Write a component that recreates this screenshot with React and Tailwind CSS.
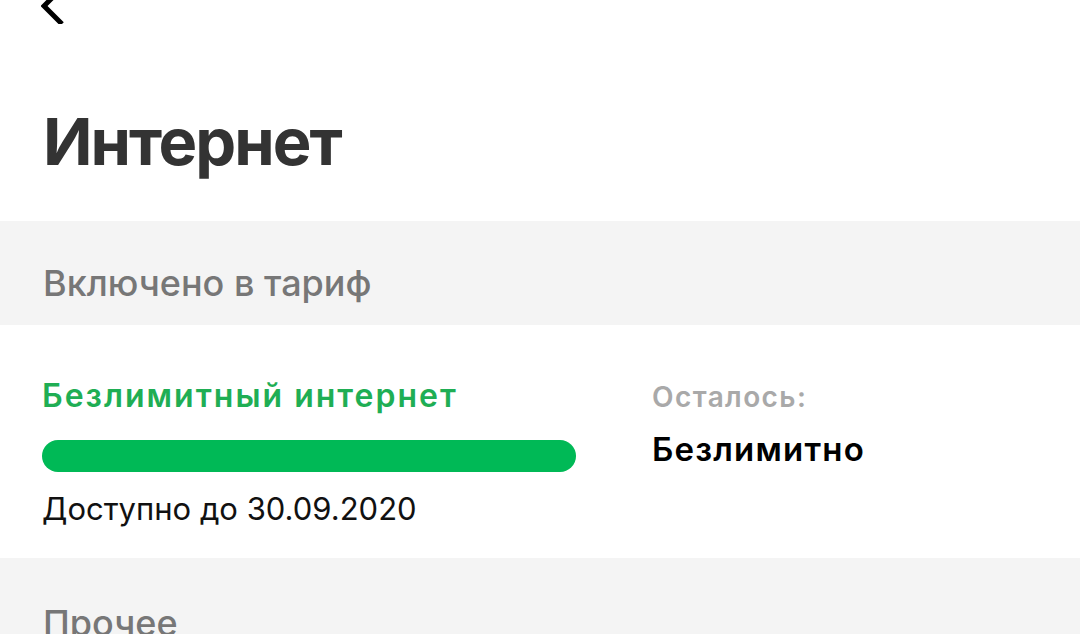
export default function App() {
  return (
    <div className="w-[1080px] h-[634px] overflow-hidden bg-white" style={{ fontFamily: 'Inter, "Noto Sans", sans-serif' }}>
      <div className="h-[221px] px-[43px] flex flex-col">
        <svg width="30" height="40" viewBox="0 0 30 40" className="-mt-[16px] -ml-[2px] block shrink-0" fill="none">
          <path d="M21 4 L3 22 L21 40" stroke="#000" strokeWidth="5" strokeLinecap="butt" strokeLinejoin="miter" />
        </svg>
        <h1 className="mt-[85px] text-[65px] leading-none font-bold text-[#333333] tracking-[-2px]">Интернет</h1>
      </div>
      <div className="h-[104px] bg-[#f4f4f4] px-[43px] pt-[44px]">
        <div className="text-[36px] leading-none font-medium text-[#777777]">Включено в тариф</div>
      </div>
      <div className="h-[233px] px-[42px] flex">
        <div className="w-[534px] flex flex-col pt-[55px]">
          <div className="text-[32px] leading-none font-semibold text-[#1fae54] tracking-[2px]">Безлимитный интернет</div>
          <div className="mt-[28px] h-[32px] w-[534px] rounded-full bg-[#00b956]" />
          <div className="mt-[21px] text-[31px] leading-none text-[#111111]">Доступно до 30.09.2020</div>
        </div>
        <div className="ml-[76px] flex flex-col pt-[58px]">
          <div className="text-[28px] leading-none font-semibold text-[#a9a9a9] tracking-[1.4px]">Осталось:</div>
          <div className="mt-[22px] text-[33px] leading-none font-semibold text-[#000000] tracking-[1.2px]">Безлимитно</div>
        </div>
      </div>
      <div className="h-[120px] bg-[#f4f4f4] px-[43px] pt-[47px]">
        <div className="text-[36px] leading-none font-medium text-[#777777]">Прочее</div>
      </div>
    </div>
  );
}
